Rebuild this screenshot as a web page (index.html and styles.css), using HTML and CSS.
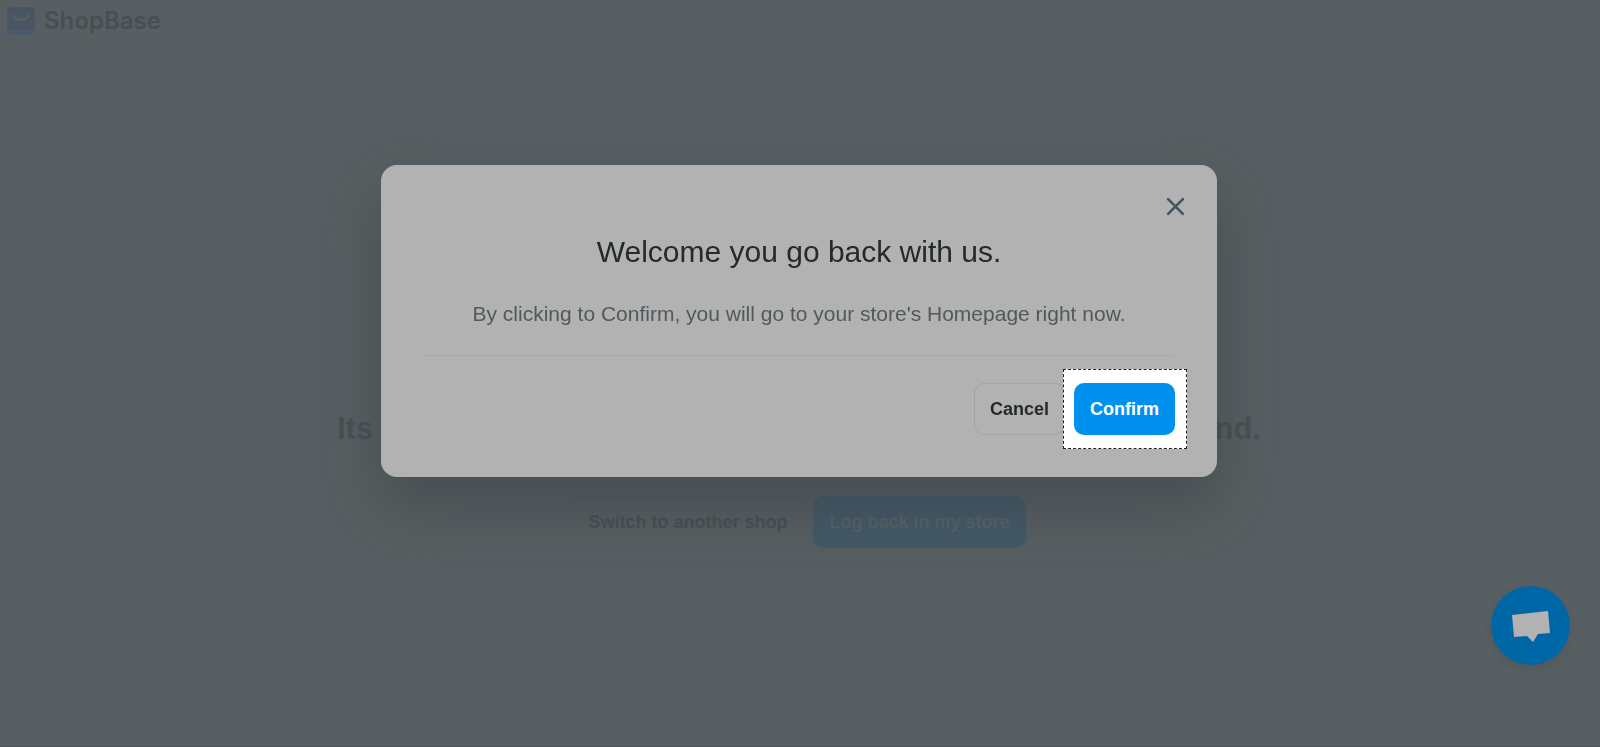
FILE: index.html
```html
<!DOCTYPE html>
<html lang="en">
<head>
<meta charset="utf-8">
<meta name="viewport" content="width=device-width, initial-scale=1">
<title>ShopBase</title>
<link rel="stylesheet" href="styles.css">
</head>
<body>
<div class="page">
  <header class="brand">
    <svg class="brand-icon" viewBox="0 0 28 28" aria-hidden="true">
      <rect width="28" height="28" rx="5" fill="#4b5b6c"/>
      <path d="M0 5a5 5 0 0 1 5-5h18a5 5 0 0 1 5 5v18H0z" fill="#4a5564"/>
      <path d="M6 8c3 6.500 13 6.500 16 0" fill="none" stroke="#575f62" stroke-width="2.600" stroke-linecap="round"/>
    </svg>
    <span class="brand-name">ShopBase</span>
  </header>
  <main class="content">
    <h1 class="headline"><span>Its</span><span>nd.</span></h1>
    <div class="actions">
      <button class="btn btn-switch" type="button">Switch to another shop</button>
      <button class="btn btn-login" type="button">Log back in my store</button>
    </div>
  </main>
</div>

<div class="overlay">
  <section class="modal" role="dialog" aria-modal="true" aria-labelledby="modal-title">
    <button class="close" type="button" aria-label="Close">
      <svg viewBox="0 0 18 18" aria-hidden="true"><path d="M2 2l14 14M16 2L2 16" fill="none" stroke="#48525a" stroke-width="2.500" stroke-linecap="round"/></svg>
    </button>
    <h2 class="modal-title" id="modal-title">Welcome you go back with us.</h2>
    <p class="modal-text">By clicking to Confirm, you will go to your store's Homepage right now.</p>
    <footer class="modal-footer">
      <button class="btn btn-cancel" type="button">Cancel</button>
      <span class="spotlight"><button class="btn btn-confirm" type="button">Confirm</button></span>
    </footer>
  </section>
</div>

<button class="chat" type="button" aria-label="Open chat">
  <svg viewBox="0 0 40 34" aria-hidden="true"><path d="M1 6L37 2l2 22-12 1-5 8-6-6-13 1z" fill="#b2b2b2"/></svg>
</button>
</body>
</html>
```
FILE: styles.css
```css
* {
  box-sizing: border-box;
}

body {
  margin: 0;
  background: #575f62;
  font-family: "Liberation Sans", Arial, sans-serif;
}

button {
  font: inherit;
  cursor: pointer;
}

.page {
  display: flex;
  flex-direction: column;
  min-height: 100vh;
  padding-right: 2px;
  border-bottom: 1px solid #4f575a;
}

.brand {
  display: flex;
  align-items: center;
  gap: 9px;
  padding: 7px;
}

.brand-icon {
  width: 28px;
  height: 28px;
}

.brand-name {
  color: #464f53;
  font-family: Inter, sans-serif;
  font-size: 24px;
  font-weight: 600;
  line-height: 28px;
}

.content {
  display: flex;
  flex: 1;
  flex-direction: column;
  align-items: center;
  justify-content: flex-end;
  gap: 47px;
  padding-bottom: 198px;
}

.headline {
  display: flex;
  justify-content: space-between;
  width: 100%;
  max-width: 924px;
  margin: 0;
  color: #495155;
  font-size: 31px;
  line-height: 40px;
}

.actions {
  display: flex;
  gap: 10px;
}

.btn {
  padding: 0 15px;
  border: 1px solid transparent;
  border-radius: 10px;
  background: transparent;
  font-size: 18px;
  font-weight: 700;
  line-height: 50px;
  white-space: nowrap;
}

.btn-switch {
  border-color: #545d60;
  color: #465054;
}

.btn-login {
  background: #445967;
  color: #56616a;
}

.overlay {
  position: fixed;
  inset: 0;
  display: flex;
  align-items: flex-start;
  justify-content: center;
  padding: 165px 2px 0 0;
}

.modal {
  position: relative;
  width: 100%;
  max-width: 836px;
  padding: 66px 42px 42px;
  border-radius: 16px;
  background: #b2b2b2;
  box-shadow: 0 28px 64px rgba(48, 56, 60, 0.45);
  text-align: center;
}

.close {
  position: absolute;
  top: 32px;
  right: 32px;
  width: 19px;
  height: 19px;
  padding: 0;
  border: 0;
  background: transparent;
}

.close svg,
.chat svg {
  display: block;
}

.modal-title {
  margin: 0;
  color: #24292c;
  font-size: 30px;
  font-weight: 400;
  line-height: 42px;
}

.modal-text {
  margin: 26px 0;
  color: #50595c;
  font-size: 21px;
  line-height: 30px;
}

.modal-footer {
  display: flex;
  justify-content: flex-end;
  padding-top: 27px;
  border-top: 1px solid #a8a9aa;
}

.btn-cancel {
  border-color: #a2a4a6;
  color: #24292c;
}

.spotlight {
  position: relative;
  margin: -14px -12px -14px -2px;
  padding: 13px 11px 13px 10px;
  border: 1px dashed #222;
  background: #fff;
}

.btn-confirm {
  background: #0091ee;
  color: #fff;
}

.chat {
  position: fixed;
  right: 30px;
  bottom: 82px;
  display: grid;
  place-items: center;
  width: 79px;
  height: 79px;
  padding: 0;
  border: 0;
  border-radius: 50%;
  background: #0067a7;
  box-shadow: 0 4px 10px rgba(0, 0, 0, 0.08);
}

.chat svg {
  width: 40px;
  height: 34px;
}
```
